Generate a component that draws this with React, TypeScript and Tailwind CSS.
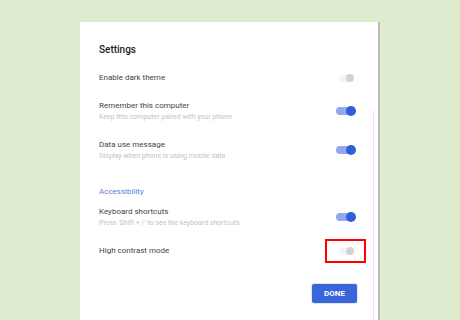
const Toggle = ({ on }: { on: boolean }) => {
  if (on) {
    return (
      <div className="relative w-[21px] h-[12px] flex items-center">
        <div className="w-[17px] h-[8px] rounded-full bg-[#8fa9ec]" />
        <div className="absolute right-[1px] top-[1px] w-[10px] h-[10px] rounded-full bg-[#2f5fd8]" />
      </div>
    );
  }
  return (
    <div className="relative w-[21px] h-[12px] flex items-center">
      <div className="ml-[3px] w-[15px] h-[7px] rounded-full bg-[#f3f3f3]" />
      <div className="absolute right-[3px] top-[2px] w-[8px] h-[8px] rounded-full bg-[#d3d3d3]" />
    </div>
  );
};

const Row = ({
  title,
  sub,
  on,
  className,
  marked,
}: {
  title: string;
  sub?: string;
  on: boolean;
  className: string;
  marked?: boolean;
}) => (
  <div className={"flex items-center justify-between " + className}>
    <div className="flex flex-col">
      <span className="text-[8px] leading-[12px] text-[#444]">{title}</span>
      {sub && <span className="text-[7px] leading-[10px] text-[#c4c4c4]">{sub}</span>}
    </div>
    <div className="relative">
      <Toggle on={on} />
      {marked && (
        <div className="absolute left-[-11px] right-[-9px] top-[-6px] bottom-[-6px] border-2 border-[#f00]" />
      )}
    </div>
  </div>
);

export default function App() {
  return (
    <div
      className="w-[460px] h-[320px] bg-[#dfebcf] overflow-hidden"
      style={{ fontFamily: "Roboto, 'Liberation Sans', sans-serif" }}
    >
      <div className="relative ml-[80px] mt-[22px] w-[300px] h-[298px] bg-white border-r-2 border-[#bcbcbc] pl-[19px] pr-[21px] pt-[21px]">
        <div className="absolute left-[293px] top-[88px] bottom-0 w-px bg-[#e8e8e8]" />
        <div className="text-[10px] leading-[14px] font-medium text-[#222]">Settings</div>
        <Row title="Enable dark theme" on={false} className="mt-[15px]" />
        <Row
          title="Remember this computer"
          sub="Keep this computer paired with your phone"
          on={true}
          className="mt-[16px]"
        />
        <Row
          title="Data use message"
          sub="Display when phone is using mobile data"
          on={true}
          className="mt-[17px]"
        />
        <div className="mt-[25px] text-[8px] leading-[12px] text-[#5a7ce2]">Accessibility</div>
        <Row
          title="Keyboard shortcuts"
          sub="Press 'Shift + /' to see the keyboard shortcuts"
          on={true}
          className="mt-[8px]"
        />
        <Row title="High contrast mode" on={false} className="mt-[17px]" marked />
        <div className="mt-[27px] flex justify-end">
          <button className="w-[45px] h-[19px] rounded-[2px] bg-[#3b66da] text-white text-[8px] font-bold shadow-[0_0_0_1px_#e4e8f4]">
            DONE
          </button>
        </div>
      </div>
    </div>
  );
}
